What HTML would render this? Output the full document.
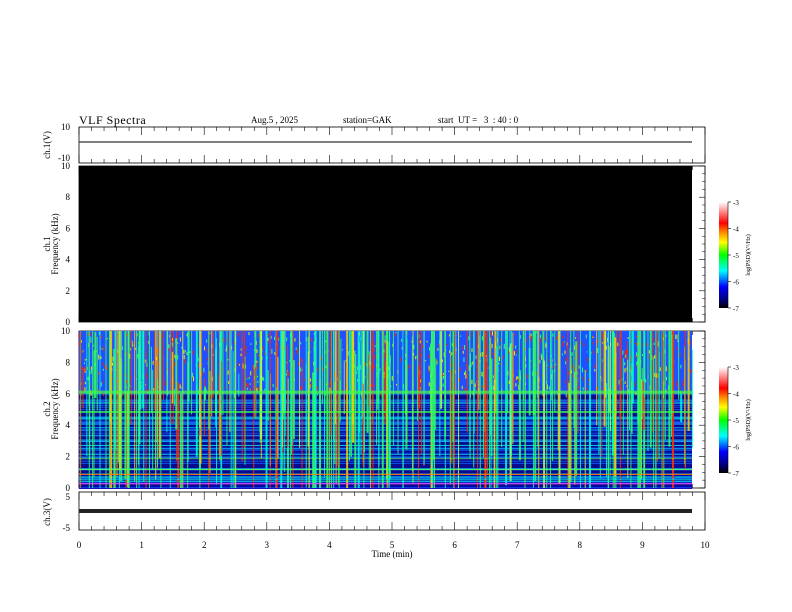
<!DOCTYPE html>
<html><head><meta charset="utf-8"><style>
body{margin:0;background:#fff;width:792px;height:612px;overflow:hidden}
svg{position:absolute;left:0;top:0}
text{font-family:"Liberation Serif",serif;fill:#000}
</style></head><body>
<svg id="s" width="792" height="612" viewBox="0 0 792 612">
<defs>
<linearGradient id="cb" x1="0" y1="1" x2="0" y2="0">
<stop offset="0" stop-color="#000"/><stop offset="0.08" stop-color="#000080"/><stop offset="0.2" stop-color="#0000ff"/><stop offset="0.35" stop-color="#00ffff"/><stop offset="0.5" stop-color="#00ff00"/><stop offset="0.62" stop-color="#ffff00"/><stop offset="0.72" stop-color="#ff8000"/><stop offset="0.8" stop-color="#ff0000"/><stop offset="1" stop-color="#ffffff"/>
</linearGradient>
</defs>
<text x="79" y="124" font-size="12" letter-spacing="0.5">VLF  Spectra</text>
<text x="251" y="123" font-size="9">Aug.5   , 2025</text>
<text x="343" y="123" font-size="9">station=GAK</text>
<text x="438" y="123" font-size="9" xml:space="preserve">start  UT =   3  : 40 : 0</text>
<g id="panels"></g>
<rect x="79" y="166" width="613" height="156" fill="#000"/>
<g id="spec"></g>
<rect x="79" y="509" width="613" height="4" fill="#222"/>
<line x1="79" y1="142" x2="692" y2="142" stroke="#333" stroke-width="1.2"/>
<text x="392" y="557" font-size="9" text-anchor="middle">Time  (min)</text>
<text transform="translate(50,145) rotate(-90)" font-size="9" text-anchor="middle">ch.1(V)</text>
<text transform="translate(50,244) rotate(-90)" font-size="9" text-anchor="middle">ch.1</text>
<text transform="translate(58,244) rotate(-90)" font-size="9" text-anchor="middle">Frequency  (kHz)</text>
<text transform="translate(50,409) rotate(-90)" font-size="9" text-anchor="middle">ch.2</text>
<text transform="translate(58,409) rotate(-90)" font-size="9" text-anchor="middle">Frequency  (kHz)</text>
<text transform="translate(50,512) rotate(-90)" font-size="9" text-anchor="middle">ch.3(V)</text>
<rect x="719" y="202" width="9" height="106" fill="url(#cb)"/>
<rect x="719" y="367" width="9" height="106" fill="url(#cb)"/>
<g id="cbl"></g>
</svg>
<script>
(function(){
var NS="http://www.w3.org/2000/svg",s=document.getElementById('s');
function el(t,a,p){var e=document.createElementNS(NS,t);for(var k in a)e.setAttribute(k,a[k]);(p||s).appendChild(e);return e;}
function tx(x,y,str,sz,anc,p){var e=el('text',{x:x,y:y,'font-size':sz||9,'text-anchor':anc||'end'},p);e.textContent=str;}
var X0=79,X1=705,W=X1-X0;
var P=[[127,163],[166,322],[331,488],[492,530]];
var g=document.getElementById('panels');
P.forEach(function(p){
 el('rect',{x:X0,y:p[0],width:W,height:p[1]-p[0],fill:'none',stroke:'#000','stroke-width':0.8},g);
 for(var i=0;i<=50;i++){var x=X0+W*i/50,L=(i%5==0)?8:4;
  el('line',{x1:x,y1:p[0],x2:x,y2:p[0]+L,stroke:'#000','stroke-width':0.6},g);
  el('line',{x1:x,y1:p[1],x2:x,y2:p[1]-L,stroke:'#000','stroke-width':0.6},g);}
});
tx(70,130,'10');tx(70,161,'-10');
for(var k=0;k<=5;k++){var y=322-(322-166)*k/5;tx(70,y+3,String(k*2));
 var y2=488-(488-331)*k/5;tx(70,y2+3,String(k*2));
 [[166,322],[331,488]].forEach(function(p){var yy=p[1]-(p[1]-p[0])*k/5;
 el('line',{x1:X1,y1:yy,x2:X1-6,y2:yy,stroke:'#000','stroke-width':0.6});
 for(var m=1;m<4&&k<5;m++){var ym=yy-(p[1]-p[0])/20*m;el('line',{x1:X1,y1:ym,x2:X1-3,y2:ym,stroke:'#000','stroke-width':0.5});}});}
tx(70,500,'5');tx(70,531,'-5');
for(var i=0;i<=10;i++)tx(X0+W*i/10,548,String(i),9,'middle');
var c=document.getElementById('cbl');
[202,367].forEach(function(t){for(var k=0;k<=4;k++){var yy=t+106*k/4;
 el('line',{x1:728,y1:yy,x2:731,y2:yy,stroke:'#000','stroke-width':0.6},c);
 tx(733,yy+3,String(-3-k),7,'start',c);}
 el('line',{x1:728,y1:t,x2:728,y2:t+106,stroke:'#000','stroke-width':0.6},c);
 var e=el('text',{transform:'translate(750,'+(t+53)+') rotate(-90)','font-size':6,'text-anchor':'middle'},c);e.textContent='log(PSD)(V\u00b2/Hz)';});
var sp=document.getElementById('spec'),T=331,B=488,H=B-T,SW=613;
var seed=7;function r(){seed=(seed*16807)%2147483647;return seed/2147483647;}
function fy(f){return B-H*f/10;}
el('rect',{x:X0,y:T,width:SW,height:fy(6)-T,fill:'#2050ff'},sp);
el('rect',{x:X0,y:fy(6),width:SW,height:B-fy(6),fill:'#0a0a90'},sp);
for(var i=0;i<70;i++){var f=r()*6,cl=['#00c8ff','#1060ff','#00ffff','#3050ff','#0000c0'][Math.floor(r()*5)];
 el('rect',{x:X0,y:fy(f),width:SW,height:1,fill:cl,opacity:0.8},sp);}
// speckles top
for(var i=0;i<900;i++){var f=6+r()*4,rr=r();
 el('rect',{x:X0+r()*SW,y:fy(f),width:1,height:1+r()*4,fill:rr<0.4?'#ff2000':rr<0.7?'#ffe000':'#30ff80'},sp);}
for(var i=0;i<400;i++){var yt,yb;
 var xx=X0+r()*SW;
 yt=r()<0.6?T:fy(6+r()*4);
 yb=r()<0.3?B:fy(r()*6);
 if(yb<yt){var q=yb;yb=yt;yt=q;}
 var rr=r(),cl=rr<0.45?'#30ff60':rr<0.62?'#ff3000':rr<0.8?'#00ffd0':rr<0.9?'#ffd000':'#c0ff40';
 el('rect',{x:xx,y:yt,width:r()<0.8?1:2,height:yb-yt,fill:cl,opacity:0.85},sp);}
el('rect',{x:X0,y:fy(6.2),width:SW,height:3,fill:'#40ff40',opacity:0.7},sp);
el('rect',{x:X0,y:fy(4.9),width:SW,height:2,fill:'#40ff40',opacity:0.7},sp);
el('rect',{x:X0,y:fy(1.9),width:SW,height:1,fill:'#60ff60',opacity:0.7},sp);
[['#ff40ff',0.3],['#00ffff',0.6],['#ff8000',0.9],['#60ff60',1.2]].forEach(function(a){el('rect',{x:X0,y:fy(a[1]),width:SW,height:1,fill:a[0]},sp);});
})();
</script>
</body></html>
